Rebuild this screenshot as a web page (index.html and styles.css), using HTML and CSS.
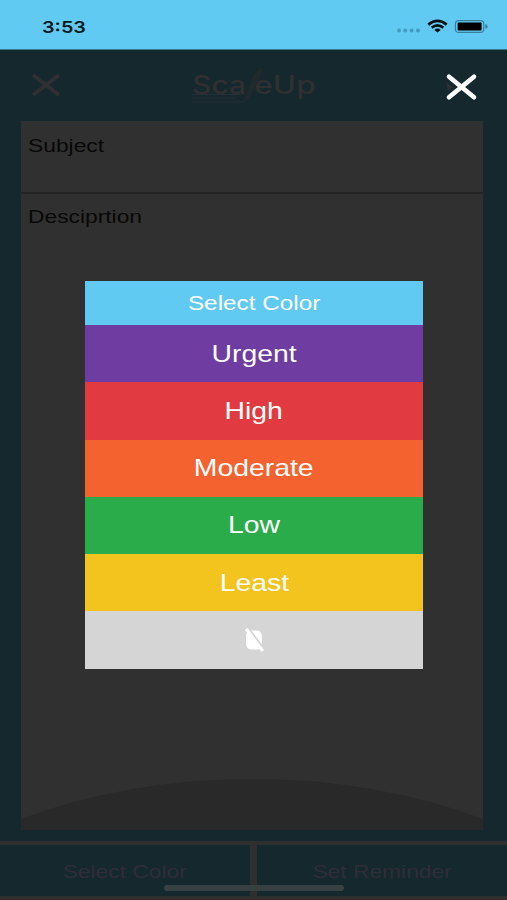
FILE: index.html
```
<!DOCTYPE html>
<html lang="en">
<head>
<meta charset="utf-8">
<title>ScaleUp</title>
<link rel="stylesheet" href="styles.css">
</head>
<body>
<div class="screen">
  <div class="status">
    <span class="time">3:53</span>
    <svg class="indicators" width="92" height="18" viewBox="0 0 92 18">
      <g fill="#419bc0"><circle cx="3" cy="12.5" r="2"/><circle cx="9.3" cy="12.5" r="2"/><circle cx="15.6" cy="12.5" r="2"/><circle cx="22" cy="12.5" r="2"/></g>
      <g fill="none" stroke="#071116" stroke-width="2.7"><path d="M32.3 6.6Q41.5 -.8 50.7 6.6"/><path d="M35.7 9.6Q41.5 5 47.3 9.6"/></g>
      <path d="M38.3 12Q41.5 9.2 44.7 12L41.5 14.6Z" fill="#071116"/>
      <rect x="59.4" y="2.6" width="28.4" height="11.8" rx="3.5" fill="none" stroke="#397f9c" stroke-width="1.2"/>
      <rect x="61.6" y="4.5" width="24" height="8" rx="1" fill="#000"/>
      <path d="M89.4 6.3Q91.7 6.3 91.7 8.5T89.4 10.7Z" fill="#397f9c"/>
    </svg>
  </div>
  <header class="bar">
    <svg class="back" width="32" height="26" viewBox="0 0 32 26"><path d="M3 3L29 23M29 3L3 23" stroke="#302f31" stroke-width="4"/></svg>
    <div class="logo">
      <span class="word">Sca</span><span class="word word-end">eUp</span>
      <svg class="mark" width="75" height="40" viewBox="0 0 75 40"><path d="M1 28.5H49M1 32H45M1 36H52L58 28" stroke="#262f33" fill="none" stroke-width="1.2"/><path d="M52 37L62 10L69 2L72 3L68 14L59 31Z" fill="#20292c"/></svg>
    </div>
    <svg class="close" width="34" height="28" viewBox="0 0 34 28"><path d="M2 9L9 14L4 18Z" fill="#302f31"/><path d="M5 3.7L30 24.3M30 3.7L5 24.3" stroke="#fff" stroke-width="4.6" stroke-linecap="round"/></svg>
  </header>
  <main class="note">
    <div class="subject"><span class="wide">Subject</span></div>
    <div class="description"><span class="wide">Desciprtion</span></div>
    <svg class="hill" width="462" height="52" viewBox="0 0 462 52"><path d="M0 41Q108 1 231 1T462 41V52H0Z" fill="#292929"/></svg>
  </main>
  <footer class="actions">
    <div class="action"><span class="wide">Select Color</span></div>
    <div class="action"><span class="wide">Set Reminder</span></div>
  </footer>
  <div class="home"></div>
  <section class="picker">
    <div class="title"><span class="wide">Select Color</span></div>
    <div class="row urgent"><span class="wide">Urgent</span></div>
    <div class="row high"><span class="wide">High</span></div>
    <div class="row moderate"><span class="wide">Moderate</span></div>
    <div class="row low"><span class="wide">Low</span></div>
    <div class="row least"><span class="wide">Least</span></div>
    <div class="row none">
      <svg width="22" height="26" viewBox="0 0 22 26"><rect x="3" y="3.5" width="16" height="19" rx="5.5" fill="#fff"/><path d="M4.8 .3L22 23.5" stroke="#d5d5d5" stroke-width="2.2"/><path d="M3.2 2L19.8 24" stroke="#fff" stroke-width="3.2"/></svg>
    </div>
  </section>
</div>
</body>
</html>
```
FILE: styles.css
```
* { box-sizing: border-box; }
body { margin: 0; font-family: "Liberation Sans", Arial, sans-serif; }
.screen {
  position: relative;
  width: 507px;
  height: 900px;
  overflow: hidden;
  display: flex;
  flex-direction: column;
  background: #14282e;
}
.wide { display: inline-block; transform: scaleX(1.18); white-space: nowrap; }
.status {
  height: 50px;
  flex: none;
  display: flex;
  justify-content: space-between;
  align-items: flex-start;
  padding: 18px 19px 0 42px;
  background: #61caf2;
  border-bottom: 1px solid #35788f;
}
.time {
  font: 600 16.5px/18px Inter, sans-serif;
  color: #071820;
  transform: scaleX(1.2);
  transform-origin: left;
}
.bar {
  height: 71px;
  flex: none;
  display: flex;
  justify-content: space-between;
  align-items: flex-start;
  padding: 22px 29px 0 30px;
}
.logo {
  position: relative;
  width: 124px;
  height: 36px;
  margin-left: 4px;
  display: flex;
  justify-content: space-between;
}
.word {
  font: 500 25px/26px Inter, sans-serif;
  color: #302f31;
  transform: scaleX(1.2);
  transform-origin: left;
  margin-left: -1px;
}
.word-end { transform: scaleX(1.26); transform-origin: right; margin-right: 1px; }
.mark { position: absolute; left: -2px; top: -6px; }
.close { margin-top: 1px; }
.note {
  position: relative;
  width: 462px;
  height: 709px;
  flex: none;
  margin-left: 21px;
  background: #303030;
  font-size: 19px;
  line-height: 22px;
  color: #080808;
}
.note .wide { transform: scaleX(1.2); transform-origin: left; }
.subject { height: 73px; padding: 14px 7px; border-bottom: 2px solid #232323; }
.description { padding: 12px 7px; }
.hill { position: absolute; left: 0; bottom: 0; }
.actions {
  height: 59px;
  margin-top: 11px;
  flex: none;
  display: grid;
  grid-template-columns: 250px 250px;
  gap: 7px;
  padding: 4px 0 3px;
  background: #302f30;
  border-bottom: 1px solid #35252a;
}
.action {
  display: flex;
  align-items: center;
  justify-content: center;
  padding-top: 2px;
  background: #14282e;
  color: #302d37;
  font-size: 19px;
  line-height: 22px;
}
.action .wide { transform: scaleX(1.2); }
.home {
  position: absolute;
  left: 164px;
  top: 885px;
  width: 180px;
  height: 6px;
  border-radius: 3px;
  background: #374144;
}
.picker {
  position: absolute;
  left: 85px;
  top: 281px;
  width: 338px;
  height: 387.5px;
  display: grid;
  grid-template-rows: 44px repeat(6, 1fr);
  color: #fff;
}
.title, .row { display: flex; align-items: center; justify-content: center; }
.title { background: #61caf2; font-size: 20.6px; }
.row { font-size: 24px; }
.urgent { background: #6f3ca2; }
.high { background: #e13b41; }
.moderate { background: #f46230; }
.low { background: #2aac4a; }
.least { background: #f3c41d; }
.none { background: #d5d5d5; }
```
